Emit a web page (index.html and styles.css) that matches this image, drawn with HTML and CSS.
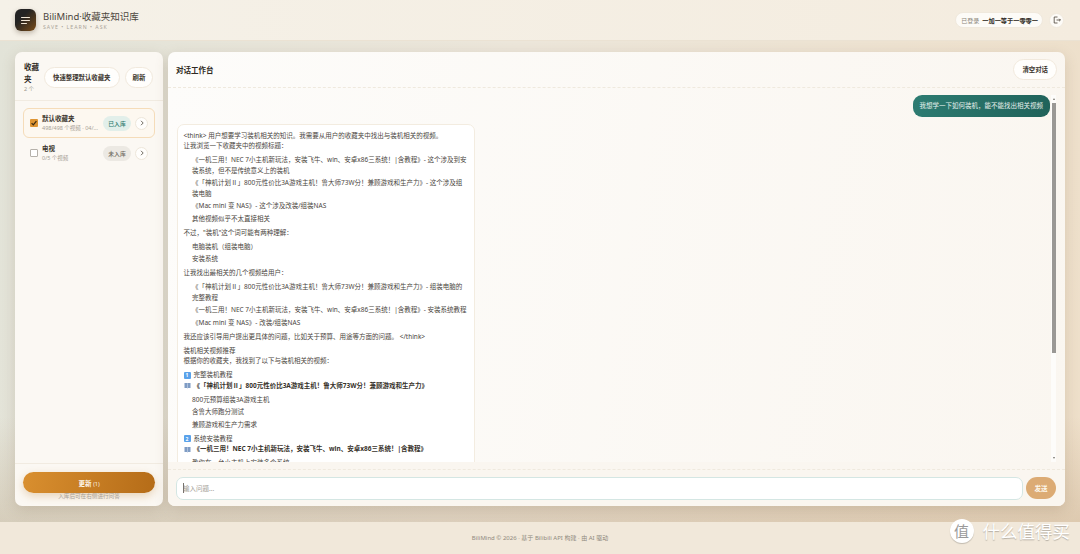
FILE: index.html
```html
<!DOCTYPE html>
<html lang="zh-CN">
<head>
  <meta charset="UTF-8" />
  <meta name="viewport" content="width=1080" />
  <title>BiliMind·收藏夹知识库</title>
  <link rel="stylesheet" href="styles.css">
</head>
<body>
  <header class="topbar">
    <div class="brand">
      <div class="logo">
        <svg width="11" height="11" viewBox="0 0 11 11" fill="none" stroke="#f1e6d6" stroke-width="1" stroke-linecap="round"><path d="M1.5 2.5h8M1.5 5.5h8M1.5 8.5h5"/></svg>
      </div>
      <div>
        <div class="brand-name">BiliMind·收藏夹知识库</div>
        <div class="brand-sub">SAVE • LEARN • ASK</div>
      </div>
    </div>
    <div class="account">
      <div class="user-pill"><span class="user-label">已登录</span><b>一加一等于一零零一</b></div>
      <button class="logout" aria-label="退出">
        <svg width="8" height="8" viewBox="0 0 8 8" fill="none" stroke="#4a4238" stroke-width=".8"><path d="M4.5 1H1.2v6h3.3M3.5 4h4M6.2 2.8 7.4 4 6.2 5.2"/></svg>
      </button>
    </div>
  </header>

  <main class="workspace">
    <aside class="panel sidebar">
      <div class="side-head">
        <div class="side-title">
          <h2>收藏夹</h2>
          <span>2 个</span>
        </div>
        <button class="pill">快速整理默认收藏夹</button>
        <button class="pill refresh">刷新</button>
      </div>
      <div class="folders">
        <div class="folder active">
          <span class="check on">
            <svg width="8" height="8" viewBox="0 0 7 7" fill="none" stroke="#3a2a12" stroke-width="1.1"><path d="M1.4 3.6 2.9 5.1 5.6 1.8"/></svg>
          </span>
          <div class="folder-info">
            <div class="folder-name">默认收藏夹</div>
            <div class="folder-meta">498/498 个视频 · 04/...</div>
          </div>
          <span class="tag in">已入库</span>
          <button class="arrow"><svg width="6" height="6" viewBox="0 0 6 6" fill="none" stroke="#4a4238" stroke-width=".8"><path d="M2 .8 4.2 3 2 5.2"/></svg></button>
        </div>
        <div class="folder">
          <span class="check"></span>
          <div class="folder-info">
            <div class="folder-name">电视</div>
            <div class="folder-meta">0/5 个视频</div>
          </div>
          <span class="tag out">未入库</span>
          <button class="arrow"><svg width="6" height="6" viewBox="0 0 6 6" fill="none" stroke="#4a4238" stroke-width=".8"><path d="M2 .8 4.2 3 2 5.2"/></svg></button>
        </div>
      </div>
      <div class="side-foot">
        <button class="update">更新 <small>(1)</small></button>
        <p>入库后可在右侧进行问答</p>
      </div>
    </aside>

    <section class="panel chat">
      <div class="chat-head">
        <h2>对话工作台</h2>
        <button class="pill clear">清空对话</button>
      </div>
      <div class="chat-body">
        <div class="messages">
          <div class="bubble">我想学一下如何装机，能不能找出相关视频</div>
          <div class="answer">
            <p>&lt;think&gt; 用户想要学习装机相关的知识。我需要从用户的收藏夹中找出与装机相关的视频。<br>让我浏览一下收藏夹中的视频标题：</p>
            <ul>
              <li>《一机三用！NEC 7小主机新玩法，安装飞牛、win、安卓x86三系统！|含教程》- 这个涉及到安<br>装系统，但不是传统意义上的装机</li>
              <li>《「神机计划Ⅱ」800元性价比3A游戏主机！鲁大师73W分！兼顾游戏和生产力》- 这个涉及组<br>装电脑</li>
              <li>《Mac mini 变 NAS》- 这个涉及改装/组装NAS</li>
              <li>其他视频似乎不太直接相关</li>
            </ul>
            <p>不过，"装机"这个词可能有两种理解：</p>
            <ul>
              <li>电脑装机（组装电脑）</li>
              <li>安装系统</li>
            </ul>
            <p>让我找出最相关的几个视频给用户：</p>
            <ul>
              <li>《「神机计划Ⅱ」800元性价比3A游戏主机！鲁大师73W分！兼顾游戏和生产力》- 组装电脑的<br>完整教程</li>
              <li>《一机三用！NEC 7小主机新玩法，安装飞牛、win、安卓x86三系统！|含教程》- 安装系统教程</li>
              <li>《Mac mini 变 NAS》- 改装/组装NAS</li>
            </ul>
            <p>我还应该引导用户提出更具体的问题，比如关于预算、用途等方面的问题。 &lt;/think&gt;</p>
            <p>装机相关视频推荐<br>根据你的收藏夹，我找到了以下与装机相关的视频：</p>
            <div class="rec-title"><span class="key">1</span>完整装机教程</div>
            <div class="rec-video">
              <svg class="book" width="7" height="7" viewBox="0 0 7 7"><path d="M.5 1h2.6l.4.5.4-.5h2.6v5H4l-.5.4L3 6H.5z" fill="#7f9cc4"/><path d="M3.5 1.6V6" stroke="#dfe7f2" stroke-width=".5"/></svg>
              <b>《「神机计划Ⅱ」800元性价比3A游戏主机！鲁大师73W分！兼顾游戏和生产力》</b>
            </div>
            <ul>
              <li>800元预算组装3A游戏主机</li>
              <li>含鲁大师跑分测试</li>
              <li>兼顾游戏和生产力需求</li>
            </ul>
            <div class="rec-title"><span class="key">2</span>系统安装教程</div>
            <div class="rec-video">
              <svg class="book" width="7" height="7" viewBox="0 0 7 7"><path d="M.5 1h2.6l.4.5.4-.5h2.6v5H4l-.5.4L3 6H.5z" fill="#7f9cc4"/><path d="M3.5 1.6V6" stroke="#dfe7f2" stroke-width=".5"/></svg>
              <b>《一机三用！NEC 7小主机新玩法，安装飞牛、win、安卓x86三系统！|含教程》</b>
            </div>
            <ul>
              <li>教你在一台小主机上安装多个系统</li>
            </ul>
          </div>
        </div>
        <div class="scrollbar">
          <span class="sb-up"></span>
          <span class="sb-thumb"></span>
          <span class="sb-down"></span>
        </div>
      </div>
      <div class="chat-foot">
        <div class="composer">
          <div class="ask-wrap">
            <input class="ask" type="text" placeholder="输入问题...">
          </div>
          <button class="send">发送</button>
        </div>
      </div>
    </section>
  </main>

  <footer class="footer">
    BiliMind © 2026 · 基于 Bilibili API 构建 · 由 AI 驱动
    <div class="watermark"><span class="wm-badge">值</span>什么值得买</div>
  </footer>
</body>
</html>
```

FILE: styles.css
```css
* {
  box-sizing: border-box;
}
html, body {
  height: 100%;
}
body {
  margin: 0;
  display: flex;
  flex-direction: column;
  height: 554px;
  overflow: hidden;
  font-family: "Noto Sans", "Noto Sans CJK SC", sans-serif;
  font-size: 6.5px;
  color: #3d372f;
  text-spacing-trim: space-all;
  background: linear-gradient(100deg, #e2e3d8 0%, #ece6da 45%, #eedfc9 100%);
}
button {
  font-family: inherit;
  cursor: pointer;
}
h2 {
  margin: 0;
  font-size: 7.5px;
  font-weight: 700;
  color: #2f2a24;
}

/* top bar */
.topbar {
  flex: none;
  height: 41px;
  display: flex;
  align-items: center;
  justify-content: space-between;
  padding: 0 16px 0 15px;
  background: linear-gradient(90deg, #f5f1e8, #f4ecdf);
  border-bottom: 1px solid #ebe2d3;
}
.brand {
  display: flex;
  align-items: center;
  gap: 7px;
}
.logo {
  width: 21px;
  height: 22px;
  display: flex;
  align-items: center;
  justify-content: center;
  border-radius: 6px;
  background: linear-gradient(135deg, #232323 35%, #7a4c18);
  box-shadow: 0 2px 5px rgba(60, 40, 20, 0.3);
}
.brand-name {
  font-size: 9.5px;
  line-height: 13px;
  color: #4b453c;
}
.brand-sub {
  font-size: 5.2px;
  line-height: 8px;
  letter-spacing: 1px;
  color: #aaa398;
}
.account {
  display: flex;
  align-items: center;
  gap: 6px;
}
.user-pill {
  height: 16px;
  display: flex;
  align-items: center;
  gap: 3px;
  padding: 0 4px 0 5px;
  border-radius: 8px;
  background: #fdfbf7;
  border: 1px solid #f0e9dd;
  font-size: 6px;
}
.user-pill b {
  font-size: 6.2px;
  color: #2f2a24;
}
.user-label {
  color: #8b857a;
}
.logout {
  width: 15px;
  height: 15px;
  display: flex;
  align-items: center;
  justify-content: center;
  padding: 0;
  border-radius: 50%;
  background: #fdfbf7;
  border: 1px solid #f0e9dd;
}

/* two panels */
.workspace {
  flex: 1;
  min-height: 0;
  display: flex;
  gap: 5px;
  padding: 11px 15px 16px;
  background: linear-gradient(180deg, transparent 78%, rgba(170, 135, 95, 0.24));
}
.panel {
  display: flex;
  flex-direction: column;
  border-radius: 7px;
  background: #fbf8f3;
  box-shadow: 0 4px 14px rgba(110, 85, 55, 0.18);
  overflow: hidden;
}
.sidebar {
  flex: none;
  width: 148px;
}
.chat {
  flex: 1;
  min-width: 0;
  background: linear-gradient(100deg, #fdfcfa, #faf6f0);
}

/* sidebar */
.side-head {
  height: 49px;
  flex: none;
  display: flex;
  align-items: center;
  gap: 4px;
  padding: 2px 8px 0 9px;
  border-bottom: 1px solid #f1ebe1;
}
.side-title {
  width: 16px;
  flex: none;
}
.side-title h2 {
  line-height: 12px;
}
.side-title span {
  font-size: 5.5px;
  line-height: 8px;
  display: block;
  color: #a09a8f;
}
.pill {
  height: 21px;
  flex: none;
  padding: 0 8px;
  border-radius: 11px;
  background: #fffefc;
  border: 1px solid #f1e9dd;
  font-size: 6.4px;
  font-weight: 700;
  color: #3a342c;
}
.refresh {
  margin-left: 1px;
  padding: 0 7px;
}
.folders {
  flex: 1;
  padding: 7px 8px 0;
}
.folder {
  height: 30px;
  display: flex;
  align-items: center;
  padding: 0 6px;
  border: 1px solid transparent;
  border-radius: 6px;
}
.folder.active {
  background: #fdf8f0;
  border-color: #f5dcb9;
}
.check {
  width: 8px;
  height: 8px;
  flex: none;
  display: flex;
  margin-right: 4px;
  border: 1px solid #b5b1aa;
  border-radius: 1px;
  background: #fff;
}
.check.on {
  border: 0;
  background: #de9533;
}
.folder-info {
  flex: 1;
  min-width: 0;
}
.folder-name {
  font-size: 6.5px;
  line-height: 10px;
  font-weight: 700;
  color: #3a342c;
}
.folder-meta {
  font-size: 5.5px;
  line-height: 9px;
  color: #a7a196;
  white-space: nowrap;
}
.tag {
  height: 15px;
  width: 28px;
  flex: none;
  display: flex;
  align-items: center;
  justify-content: center;
  border-radius: 8px;
  font-size: 5.8px;
  font-weight: 500;
}
.tag.in {
  background: #e2efea;
  color: #2f7a6e;
}
.tag.out {
  background: #ece9e3;
  color: #6f695f;
}
.arrow {
  width: 13px;
  height: 13px;
  flex: none;
  display: flex;
  align-items: center;
  justify-content: center;
  margin-left: 4px;
  padding: 0;
  border-radius: 50%;
  background: #fffefc;
  border: 1px solid #eee7db;
}
.side-foot {
  flex: none;
  height: 43px;
  padding: 8px 8px 0;
  border-top: 1px solid #f1ebe1;
}
.update {
  width: 100%;
  height: 21px;
  display: block;
  border: 0;
  border-radius: 11px;
  background: linear-gradient(100deg, #d98f2f, #b56c18);
  box-shadow: 0 3px 8px rgba(190, 125, 45, 0.3);
  color: #fdf6ea;
  font-size: 6.5px;
  font-weight: 700;
}
.update small {
  font-size: 5.5px;
  font-weight: 400;
}
.side-foot p {
  margin: 0;
  font-size: 5.6px;
  line-height: 7px;
  text-align: center;
  color: #a8a297;
}

/* chat */
.chat-head {
  height: 36px;
  flex: none;
  display: flex;
  align-items: center;
  justify-content: space-between;
  padding: 0 8px;
  border-bottom: 1px dashed #efe9de;
}
.clear {
  padding: 0 8px;
}
.chat-body {
  height: 367px;
  flex: none;
  display: flex;
  margin: 7px 9px 0 9px;
}
.messages {
  flex: 1;
  min-width: 0;
  padding-right: 1px;
  overflow: hidden;
  display: flex;
  flex-direction: column;
  align-items: flex-start;
}
.scrollbar {
  width: 5px;
  flex: none;
  display: flex;
  flex-direction: column;
  align-items: center;
  background: #fdfcfa;
}
.sb-up, .sb-down {
  width: 0;
  height: 0;
  border-left: 1.5px solid transparent;
  border-right: 1.5px solid transparent;
}
.sb-up {
  margin: 3px 0 3px;
  border-bottom: 2px solid #77736d;
}
.sb-down {
  margin: auto 0 3px;
  border-top: 2px solid #77736d;
}
.sb-thumb {
  width: 4px;
  height: 250px;
  background: #9a9895;
}
.bubble {
  flex: none;
  align-self: flex-end;
  height: 22px;
  line-height: 22px;
  padding: 0 7px;
  border-radius: 9px;
  background: linear-gradient(100deg, #2d7c72, #20625a);
  color: #e6f0ec;
}
.answer {
  flex: none;
  width: 298px;
  margin-top: 7px;
  padding: 5.5px 5.5px;
  background: #fff;
  border: 1px solid #f3ece0;
  border-radius: 7px;
  line-height: 10.5px;
  color: #4a453d;
  white-space: nowrap;
}
.answer p {
  margin: 0 0 3.5px;
}
.answer ul {
  list-style: none;
  margin: 0 0 3.5px;
  padding: 0 0 0 8.5px;
}
.answer li {
  margin-bottom: 2px;
}
.rec-title {
  display: flex;
  align-items: center;
  gap: 3px;
}
.key {
  width: 7px;
  height: 7px;
  display: flex;
  align-items: center;
  justify-content: center;
  border-radius: 1px;
  background: #5aa2ea;
  color: #fff;
  font-size: 5px;
  font-weight: 700;
}
.rec-video {
  display: flex;
  align-items: center;
  gap: 3px;
  margin-bottom: 3.5px;
  color: #37322b;
}
.book {
  flex: none;
}
.chat-foot {
  flex: 1;
  display: flex;
  padding-top: 7px;
  background: #faf6f0;
}
.composer {
  flex: 1;
  display: flex;
  align-items: center;
  gap: 3px;
  padding: 0 9px 0 8px;
  border-top: 1px dashed #efe9de;
}
.ask-wrap {
  position: relative;
  flex: 1;
}
.ask-wrap::before {
  content: "";
  position: absolute;
  left: 7px;
  top: 6px;
  width: 1px;
  height: 10px;
  background: #77736d;
}
.ask {
  display: block;
  width: 100%;
  height: 23px;
  padding: 0 6px;
  border: 1.5px solid #d4e6e3;
  border-radius: 7px;
  outline: none;
  background: #fff;
  font-family: inherit;
  font-size: 6.5px;
}
.ask::placeholder {
  color: #a5a096;
}
.send {
  width: 30px;
  height: 22px;
  flex: none;
  border: 0;
  border-radius: 11px;
  background: #dcab74;
  color: #fdf6ea;
  font-size: 6.5px;
  font-weight: 700;
}

/* footer */
.footer {
  position: relative;
  flex: none;
  height: 32px;
  padding-bottom: 1px;
  display: flex;
  align-items: center;
  justify-content: center;
  background: #f1e8da;
  color: #8f897d;
  font-size: 6px;
}
.watermark {
  position: absolute;
  right: 10px;
  top: -3px;
  display: flex;
  align-items: center;
  gap: 9px;
  font-size: 17.5px;
  line-height: 24px;
  color: #fff;
  text-shadow: 0 1px 1px rgba(0, 0, 0, 0.25);
}
.wm-badge {
  width: 24px;
  height: 24px;
  display: flex;
  align-items: center;
  justify-content: center;
  border-radius: 50%;
  background: #fff;
  color: #9a9a9a;
  font-size: 15px;
  text-shadow: none;
  box-shadow: 0 1px 1px rgba(0, 0, 0, 0.2);
}
```
